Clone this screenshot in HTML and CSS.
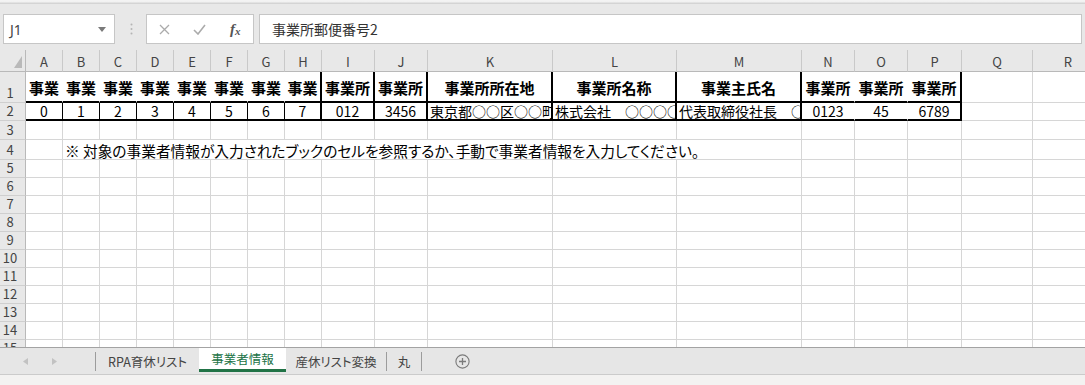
FILE: index.html
```html
<!DOCTYPE html>
<html lang="ja">
<head>
<meta charset="utf-8">
<title>事業者情報</title>
<link rel="stylesheet" href="styles.css">
</head>
<body>
<div class="app">
  <div class="ribbon-edge"></div>
  <div class="formula-bar">
    <div class="name-box">
      <span>J1</span>
      <svg class="dd" width="8" height="5" viewBox="0 0 8 5"><path d="M0 0h8L4 5z" fill="#7a7a7a"/></svg>
    </div>
    <div class="dots">
      <svg width="3" height="12" viewBox="0 0 3 12"><circle cx="1.5" cy="1.5" r="1" fill="#b4b4b4"/><circle cx="1.5" cy="6" r="1" fill="#b4b4b4"/><circle cx="1.5" cy="10.5" r="1" fill="#b4b4b4"/></svg>
    </div>
    <div class="fx-box">
      <span class="fx-slot"><svg width="11" height="11" viewBox="0 0 11 11"><path d="M1 1l9 9M10 1l-9 9" stroke="#ababab" stroke-width="1.3" fill="none"/></svg></span>
      <span class="fx-slot"><svg width="13" height="11" viewBox="0 0 13 11"><path d="M1 6l4 4 7-9" stroke="#ababab" stroke-width="1.6" fill="none"/></svg></span>
      <span class="fx-slot fx"><i>f</i><i class="x">x</i></span>
    </div>
    <div class="formula-input">事業所郵便番号2</div>
  </div>

  <div class="sheet">
    <table class="grid">
      <colgroup>
        <col class="w-rh">
        <col class="w-a"><col class="w-a"><col class="w-a"><col class="w-a"><col class="w-a"><col class="w-a"><col class="w-a"><col class="w-a">
        <col class="w-i"><col class="w-i"><col class="w-k"><col class="w-l"><col class="w-k">
        <col class="w-i"><col class="w-i"><col class="w-p"><col class="w-q"><col class="w-q">
      </colgroup>
      <thead>
        <tr class="hdr">
          <th class="corner"><svg width="8" height="12" viewBox="0 0 8 12"><path d="M8 0V12H0z" fill="#b9b9b9"/></svg></th>
          <th>A</th><th>B</th><th>C</th><th>D</th><th>E</th><th>F</th><th>G</th><th>H</th>
          <th>I</th><th>J</th><th>K</th><th>L</th><th>M</th><th>N</th><th>O</th><th>P</th><th>Q</th><th>R</th>
        </tr>
      </thead>
      <tbody>
        <tr class="r31">
          <th class="rh">1</th>
          <td class="hd bw bb">事業</td><td class="hd bw bb">事業</td><td class="hd bw bb">事業</td><td class="hd bw bb">事業</td>
          <td class="hd bw bb">事業</td><td class="hd bw bb">事業</td><td class="hd bw bb">事業</td><td class="hd bT bb">事業</td>
          <td class="hd bT bb">事業所</td><td class="hd bT bb">事業所</td><td class="hd bT bb">事業所所在地</td><td class="hd bT bb">事業所名称</td>
          <td class="hd bT bb">事業主氏名</td><td class="hd bw bb">事業所</td><td class="hd bw bb">事業所</td><td class="hd bT bb">事業所</td>
          <td></td><td></td>
        </tr>
        <tr class="r18">
          <th class="rh">2</th>
          <td class="c bt bb d">0</td><td class="c bt bb d">1</td><td class="c bt bb d">2</td><td class="c bt bb d">3</td>
          <td class="c bt bb d">4</td><td class="c bt bb d">5</td><td class="c bt bb d">6</td><td class="c bT bb d">7</td>
          <td class="c bT bb d">012</td><td class="c bT bb d">3456</td><td class="l bT bb d">東京都○○区○○町</td><td class="l bT bb d">株式会社　○○○○</td>
          <td class="l bT bb d">代表取締役社長　○</td><td class="c bw bb d">0123</td><td class="c bw bb d">45</td><td class="c bT bb d">6789</td>
          <td></td><td></td>
        </tr>
        <tr class="r19">
          <th class="rh">3</th>
          <td></td><td></td><td></td><td></td><td></td><td></td><td></td><td></td><td></td>
          <td></td><td></td><td></td><td></td><td></td><td></td><td></td><td></td><td></td>
        </tr>
        <tr class="r20">
          <th class="rh">4</th>
          <td></td>
          <td class="note" colspan="12">※ 対象の事業者情報が入力されたブックのセルを参照するか、手動で事業者情報を入力してください。</td>
          <td></td><td></td><td></td><td></td><td></td>
        </tr>
        <tr class="r18">
          <th class="rh">5</th>
          <td></td><td></td><td></td><td></td><td></td><td></td><td></td><td></td><td></td>
          <td></td><td></td><td></td><td></td><td></td><td></td><td></td><td></td><td></td>
        </tr>
        <tr class="r18">
          <th class="rh">6</th>
          <td></td><td></td><td></td><td></td><td></td><td></td><td></td><td></td><td></td>
          <td></td><td></td><td></td><td></td><td></td><td></td><td></td><td></td><td></td>
        </tr>
        <tr class="r18">
          <th class="rh">7</th>
          <td></td><td></td><td></td><td></td><td></td><td></td><td></td><td></td><td></td>
          <td></td><td></td><td></td><td></td><td></td><td></td><td></td><td></td><td></td>
        </tr>
        <tr class="r18">
          <th class="rh">8</th>
          <td></td><td></td><td></td><td></td><td></td><td></td><td></td><td></td><td></td>
          <td></td><td></td><td></td><td></td><td></td><td></td><td></td><td></td><td></td>
        </tr>
        <tr class="r18">
          <th class="rh">9</th>
          <td></td><td></td><td></td><td></td><td></td><td></td><td></td><td></td><td></td>
          <td></td><td></td><td></td><td></td><td></td><td></td><td></td><td></td><td></td>
        </tr>
        <tr class="r18">
          <th class="rh">10</th>
          <td></td><td></td><td></td><td></td><td></td><td></td><td></td><td></td><td></td>
          <td></td><td></td><td></td><td></td><td></td><td></td><td></td><td></td><td></td>
        </tr>
        <tr class="r18">
          <th class="rh">11</th>
          <td></td><td></td><td></td><td></td><td></td><td></td><td></td><td></td><td></td>
          <td></td><td></td><td></td><td></td><td></td><td></td><td></td><td></td><td></td>
        </tr>
        <tr class="r18">
          <th class="rh">12</th>
          <td></td><td></td><td></td><td></td><td></td><td></td><td></td><td></td><td></td>
          <td></td><td></td><td></td><td></td><td></td><td></td><td></td><td></td><td></td>
        </tr>
        <tr class="r18">
          <th class="rh">13</th>
          <td></td><td></td><td></td><td></td><td></td><td></td><td></td><td></td><td></td>
          <td></td><td></td><td></td><td></td><td></td><td></td><td></td><td></td><td></td>
        </tr>
        <tr class="r18">
          <th class="rh">14</th>
          <td></td><td></td><td></td><td></td><td></td><td></td><td></td><td></td><td></td>
          <td></td><td></td><td></td><td></td><td></td><td></td><td></td><td></td><td></td>
        </tr>
        <tr class="r18">
          <th class="rh">15</th>
          <td></td><td></td><td></td><td></td><td></td><td></td><td></td><td></td><td></td>
          <td></td><td></td><td></td><td></td><td></td><td></td><td></td><td></td><td></td>
        </tr>
      </tbody>
    </table>
  </div>

  <div class="tabbar">
    <div class="tab-nav">
      <svg width="5" height="7" viewBox="0 0 5 7"><path d="M5 0V7L0 3.5z" fill="#c2c2c2"/></svg>
      <svg width="5" height="7" viewBox="0 0 5 7"><path d="M0 0V7L5 3.5z" fill="#c2c2c2"/></svg>
    </div>
    <span class="sep"></span>
    <div class="tab t-rpa">RPA育休リスト</div>
    <div class="tab active">事業者情報</div>
    <div class="tab t-san">産休リスト変換</div>
    <span class="sep"></span>
    <div class="tab t-maru">丸</div>
    <span class="sep"></span>
    <div class="add-sheet">
      <svg width="15" height="15" viewBox="0 0 15 15"><circle cx="7.5" cy="7.5" r="6.6" fill="none" stroke="#7a7a7a" stroke-width="1.1"/><path d="M7.5 4v7M4 7.5h7" stroke="#7a7a7a" stroke-width="1.3"/></svg>
    </div>
  </div>
  <div class="statusbar"></div>
</div>
</body>
</html>
```

FILE: styles.css
```css
html, body {
  margin: 0;
  padding: 0;
}

body {
  font-family: "Noto Sans CJK JP", "Noto Sans", sans-serif;
  background: #e8e8e8;
}

.app {
  width: 1085px;
  height: 385px;
  display: flex;
  flex-direction: column;
  overflow: hidden;
  background: #e8e8e8;
}

.ribbon-edge {
  flex: none;
  height: 4px;
  background: linear-gradient(#f3f3f3 0, #f3f3f3 35%, #cdcdcd 100%);
}

/* ---------- formula bar ---------- */
.formula-bar {
  flex: none;
  height: 46px;
  box-sizing: border-box;
  padding: 10px 3px 0 3px;
  display: flex;
  align-items: flex-start;
}

.name-box {
  width: 112px;
  height: 30px;
  box-sizing: border-box;
  border: 1px solid #c6c6c6;
  background: #fff;
  display: flex;
  align-items: center;
  justify-content: space-between;
  padding: 0 8px 0 6px;
  font-family: "Noto Sans", sans-serif;
  font-size: 14px;
  color: #444;
}

.dots {
  width: 31px;
  height: 30px;
  display: flex;
  align-items: center;
  justify-content: center;
  padding-left: 1px;
  box-sizing: border-box;
}

.fx-box {
  width: 108px;
  height: 30px;
  box-sizing: border-box;
  border: 1px solid #c6c6c6;
  background: #fff;
  display: flex;
  align-items: center;
}

.fx-slot {
  width: 36px;
  display: flex;
  align-items: center;
  justify-content: center;
}

.fx {
  font-family: "Liberation Serif", serif;
  font-size: 15px;
  color: #555;
  font-weight: bold;
}

.fx .x {
  font-size: 11px;
  position: relative;
  top: 2px;
}

.formula-input {
  flex: 1;
  margin-left: 5px;
  height: 30px;
  box-sizing: border-box;
  border: 1px solid #c6c6c6;
  background: #fff;
  padding-left: 12px;
  font-size: 14px;
  line-height: 28px;
  color: #333;
  font-feature-settings: "palt";
}

/* ---------- sheet grid ---------- */
.sheet {
  flex: 1 1 auto;
  min-height: 0;
  overflow: hidden;
  background: #fff;
}

.grid {
  border-collapse: separate;
  border-spacing: 0;
  table-layout: fixed;
  width: 1104px;
}

.w-rh { width: 26px; }
.w-a { width: 37px; }
.w-i { width: 53px; }
.w-k { width: 125px; }
.w-l { width: 124px; }
.w-p { width: 54px; }
.w-q { width: 71px; }

.hdr { height: 22px; }
.r31 { height: 31px; }
.r18 { height: 18px; }
.r19 { height: 19px; }
.r20 { height: 20px; }

.grid thead th {
  background: #e8e8e8;
  border-right: 1px solid #c9c9c9;
  border-bottom: 1px solid #b9b9b9;
  font-family: "Noto Sans CJK JP", sans-serif;
  font-weight: normal;
  font-size: 13px;
  line-height: 16px;
  color: #444;
  padding: 0 0 1px 0;
  vertical-align: bottom;
  text-align: center;
}

.grid thead th.corner {
  text-align: right;
  padding: 0 3px 3px 0;
  border-right-color: #b9b9b9;
}

.grid thead th.corner svg {
  display: block;
  margin-left: auto;
}

.rh {
  background: #e8e8e8;
  border-right: 1px solid #b9b9b9;
  border-bottom: 1px solid #cfcfcf;
  font-family: "Noto Sans CJK JP", sans-serif;
  font-weight: normal;
  font-size: 13px;
  line-height: 16px;
  color: #444;
  padding: 0 5px 1px 0;
  text-align: center;
  vertical-align: bottom;
}

.grid td {
  border-right: 1px solid #d6d6d6;
  border-bottom: 1px solid #d6d6d6;
  padding: 0 2px;
  white-space: nowrap;
  overflow: hidden;
  vertical-align: bottom;
  font-size: 14px;
  line-height: 17px;
  color: #000;
}

.grid td.d {
  line-height: 16px;
  text-overflow: clip;
}

.grid td.c {
  text-align: center;
  overflow: visible;
}

.grid td.l { text-align: left; }

.grid td.hd {
  font-weight: bold;
  font-size: 15px;
  text-align: center;
  vertical-align: middle;
  padding-top: 2px;
  padding-left: 0;
  padding-right: 0;
}

.grid td.bw { border-right: 1px solid #fff; }
.grid td.bt { border-right: 1px solid #000; }
.grid td.bT { border-right: 2px solid #000; }
.grid td.bb { border-bottom: 2px solid #000; }

.grid td.note {
  font-size: 14.7px;
  font-feature-settings: "palt";
  padding-left: 2px;
  overflow: visible;
}

/* ---------- sheet tabs ---------- */
.tabbar {
  flex: none;
  height: 28px;
  box-sizing: border-box;
  border-top: 1px solid #a3a3a3;
  border-bottom: 1px solid #cbcbcb;
  background: #e6e6e6;
  display: flex;
  align-items: flex-start;
  font-size: 12.5px;
  color: #444;
  font-feature-settings: "palt";
}

.tab-nav {
  width: 95px;
  height: 26px;
  display: flex;
  align-items: center;
  gap: 24px;
  padding-left: 23px;
  box-sizing: border-box;
}

.sep {
  width: 1px;
  height: 19px;
  margin-top: 4px;
  background: #9c9c9c;
  flex: none;
}

.tab {
  height: 26px;
  box-sizing: border-box;
  display: flex;
  align-items: center;
  justify-content: center;
  white-space: nowrap;
}

.t-rpa { width: 103px; }
.t-san { width: 100px; }
.t-maru { width: 34px; }

.tab.active {
  width: 87px;
  height: 24px;
  background: #fff;
  color: #217346;
  border-bottom: 3px solid #217346;
}

.add-sheet {
  width: 80px;
  height: 26px;
  display: flex;
  align-items: center;
  justify-content: center;
}

.statusbar {
  flex: none;
  height: 10px;
  background: #f3f2f1;
}
```
